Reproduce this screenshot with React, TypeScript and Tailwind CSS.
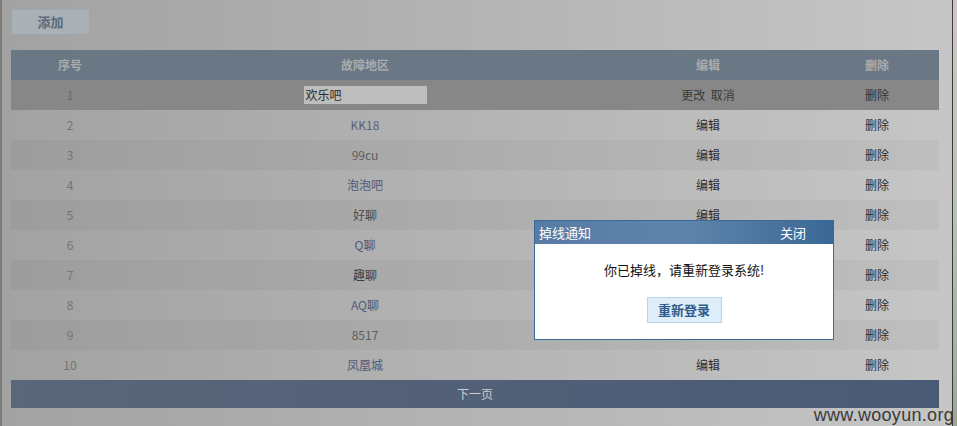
import React from "react";

const rows = [
  { no: 2, name: "KK18", tone: "text-[#586276]" },
  { no: 3, name: "99cu", tone: "text-[#5e5e5e]" },
  { no: 4, name: "泡泡吧", tone: "text-[#4c5a78]" },
  { no: 5, name: "好聊", tone: "text-[#4a4a4a]" },
  { no: 6, name: "Q聊", tone: "text-[#4c5a78]" },
  { no: 7, name: "趣聊", tone: "text-[#3e3e3e]" },
  { no: 8, name: "AQ聊", tone: "text-[#4c5a78]" },
  { no: 9, name: "8517", tone: "text-[#5e5e5e]" },
  { no: 10, name: "凤凰城", tone: "text-[#4c5a78]" },
];

// rows whose 编辑 cell sits under the popup
const covered = [6, 7, 8, 9];

const font = "font-['SimSun','Noto_Sans_CJK_SC',sans-serif]";

export default function App() {
  return (
    <div className={`relative flex h-[426px] w-[957px] overflow-hidden text-[12px] ${font}`}>
      <div className="w-[2px] bg-[#7d7d77]" />
      <div className="w-[950px] bg-gradient-to-r from-[#a2a2a2] to-[#c6c6c6] pl-[9px] pt-[9px]">
        <button className="h-[26px] w-[79px] border border-[#9fa7ad] bg-[#a9b1b7] text-[13px] font-bold text-[#5b6a78]">
          添加
        </button>

        <table className="mt-[15px] w-[928px] table-fixed border-collapse">
          <colgroup>
            <col className="w-[118px]" />
            <col className="w-[472px]" />
            <col className="w-[214px]" />
            <col className="w-[124px]" />
          </colgroup>
          <thead>
            <tr className="h-[30px] bg-[#6a7785] font-bold text-[#a9acaf]">
              <th>序号</th>
              <th>故障地区</th>
              <th>编辑</th>
              <th>删除</th>
            </tr>
          </thead>
          <tbody>
            <tr className="h-[30px] bg-[#878787] text-center">
              <td className="text-[#6a6a6a]">1</td>
              <td>
                <div className="mx-auto h-[18px] w-[123px] bg-[#bdbdbd] pl-[2px] text-left leading-[18px] text-[#2a2a2a]">
                  欢乐吧
                </div>
              </td>
              <td className="text-[#3a3a3a]">更改&nbsp;&nbsp;取消</td>
              <td className="text-[#333]">删除</td>
            </tr>
            {rows.map((r) => (
              <tr
                key={r.no}
                className={`h-[30px] text-center ${r.no % 2 === 1 ? "bg-black/[0.035]" : ""}`}
              >
                <td className="text-[#737373]">{r.no}</td>
                <td className={r.tone}>{r.name}</td>
                <td className="text-[#2e2e2e]">{covered.includes(r.no) ? "" : "编辑"}</td>
                <td className="text-[#2e2e2e]">删除</td>
              </tr>
            ))}
            <tr className="h-[28px] bg-gradient-to-r from-[#5a6679] to-[#4a5a76] text-center">
              <td colSpan={4} className="text-[#c9ced6]">
                下一页
              </td>
            </tr>
          </tbody>
        </table>
      </div>
      <div className="w-[1px] bg-[#3b3b3b]" />
      <div className="flex-1 bg-gradient-to-b from-[#cfc6c6] via-[#b9c2b4] to-[#9ea69a]" />

      <div className="absolute left-[534px] top-[220px] w-[300px] border border-[#3c6a98] bg-white">
        <div className="flex h-[23px] items-center justify-between bg-gradient-to-r from-[#587ba3] via-[#5f84ab] to-[#3a6896] pl-[4px] pr-[27px] text-[13px] text-white">
          <span>掉线通知</span>
          <span>关闭</span>
        </div>
        <div className="flex h-[95px] flex-col items-center pt-[16px]">
          <p className="text-[13px] text-[#111]">你已掉线，请重新登录系统!</p>
          <button className="mt-[17px] h-[26px] w-[75px] border border-[#bcd4ea] bg-[#deedfa] text-[13px] font-bold text-[#2d5b8b]">
            重新登录
          </button>
        </div>
      </div>

      <div className="absolute bottom-[-3px] right-[3px] font-['Liberation_Sans',sans-serif] text-[18px] tracking-[0.3px] text-[#3a3a3a]">
        www.wooyun.org
      </div>
    </div>
  );
}
